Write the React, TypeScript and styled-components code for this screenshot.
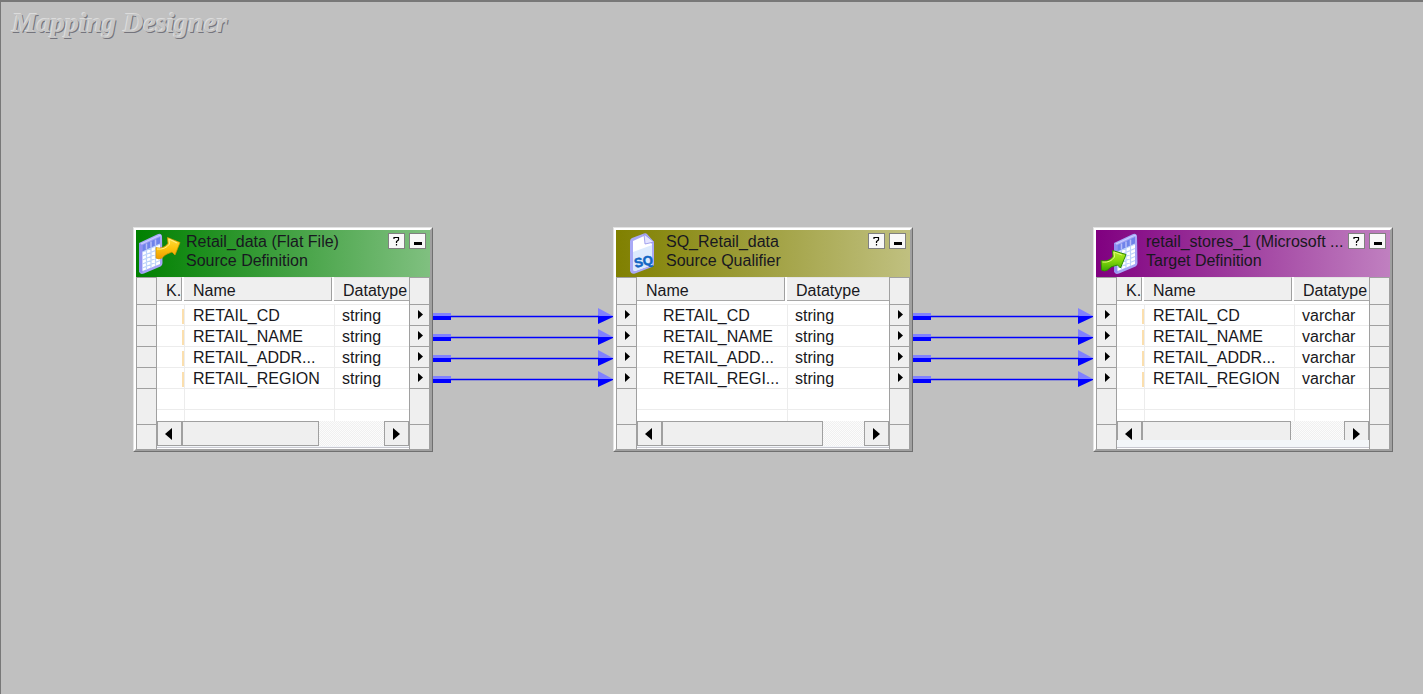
import React from "react";
import styled, { createGlobalStyle, css } from "styled-components";

const GlobalStyle = createGlobalStyle`
  *, *::before, *::after { box-sizing: border-box; }
  body {
    margin: 0;
    background: #c0c0c0;
    color: #181820;
    font-family: "Liberation Sans", Arial, sans-serif;
    font-size: 16px;
  }
  button { font: inherit; color: inherit; }
`;

type Kind = "source" | "qualifier" | "target";

const headerColors: Record<Kind, [string, string]> = {
  source: ["#008000", "#80c080"],
  qualifier: ["#808000", "#c0c080"],
  target: ["#800080", "#c080c0"],
};

const Workspace = styled.main`
  position: relative;
  min-height: 100vh;
  padding: 7px 11px;
  overflow: hidden;
  background: #c0c0c0;
  border-top: 2px solid #787878;
  border-left: 1px solid #787878;
`;

const WorkspaceTitle = styled.h1`
  margin: 0;
  font-family: "Liberation Serif", "Times New Roman", serif;
  font-size: 28px;
  line-height: 28px;
  font-style: italic;
  font-weight: 700;
  color: #c6c6c6;
  text-shadow: -1px -1px 0 #dcdcdc, 1px 1px 0 #74747c;
`;

const LinkLayer = styled.svg`
  position: absolute;
  top: -2px;
  left: -1px;
  width: 100%;
  height: 100%;
  pointer-events: none;
`;

const NodeFrame = styled.section<{ $x: number; $y: number }>`
  position: absolute;
  left: ${(p) => p.$x}px;
  top: ${(p) => p.$y}px;
  width: 300px;
  border: 1px solid;
  border-color: #e3e3e3 #707070 #707070 #e3e3e3;
`;

const NodeInner = styled.div`
  border: 2px solid;
  border-color: #fff #a0a0a0 #a0a0a0 #fff;
`;

const NodeHeader = styled.header<{ $kind: Kind }>`
  display: flex;
  height: 47px;
  padding: 3px 4px 0 2px;
  background: linear-gradient(
    to right,
    ${(p) => headerColors[p.$kind][0]},
    ${(p) => headerColors[p.$kind][1]}
  );
`;

const IconSlot = styled.div`
  flex: none;
  width: 48px;
  svg { display: block; }
`;

const Titles = styled.div`
  flex: 1;
  min-width: 0;
  white-space: nowrap;
`;

const NodeTitle = styled.h2`
  margin: 0;
  font-size: 16px;
  line-height: 18px;
  font-weight: 400;
`;

const NodeSubtitle = styled.p`
  margin: 0;
  line-height: 20px;
`;

const HeaderButtons = styled.div`
  display: flex;
  gap: 4px;
`;

const HeaderButton = styled.button`
  display: flex;
  align-items: center;
  justify-content: center;
  width: 17px;
  height: 16px;
  padding: 0;
  border: 1px solid #808080;
  background: #f8f8f8;
`;

const NodeBody = styled.div`
  display: grid;
  grid-template-columns: 21px 1fr 21px;
  height: 172px;
`;

const Gutter = styled.div`
  display: grid;
  grid-template-rows: 27px repeat(4, 21px) 36px 25px;
  border: 1px solid #a0a0a0;
  border-width: 0 1px;
`;

const Port = styled.div`
  display: flex;
  align-items: center;
  padding: 0 0 2px 8px;
  background: #efefef;
  border-top: 1px solid #a0a0a0;
`;

const Content = styled.div`
  display: flex;
  flex-direction: column;
  min-width: 0;
  background: #fff;
`;

const Columns = styled.table`
  width: 100%;
  table-layout: fixed;
  border-collapse: separate;
  border-spacing: 0;
  white-space: nowrap;
`;

const Col = styled.col<{ $width?: number }>`
  ${(p) => p.$width && css`width: ${p.$width}px;`}
`;

const HeadCell = styled.th`
  height: 27px;
  padding: 0;
  vertical-align: top;
  text-align: left;
  font-weight: 400;
`;

const HeadLabel = styled.div<{ $last?: boolean }>`
  height: 24px;
  padding-left: 9px;
  line-height: 26px;
  background: #efefef;
  border-top: 1px solid #e4e4e4;
  border-bottom: 1px solid #a8a8a8;
  ${(p) =>
    !p.$last &&
    css`
      margin-right: 2px;
      border-right: 1px solid #a0a0a0;
    `}
`;

const Cell = styled.td<{ $indent?: number; $short?: boolean }>`
  height: ${(p) => (p.$short ? 12 : 21)}px;
  padding: 2px 0 0 ${(p) => p.$indent ?? 7}px;
  line-height: 18px;
  border-top: 1px solid #ececec;
  & + & { border-left: 1px solid #ececec; }
`;

const KeyMark = styled.div`
  width: 2px;
  height: 15px;
  margin-left: auto;
  background: #fbdfae;
`;

const ScrollBar = styled.div<{ $clipped?: boolean }>`
  display: flex;
  height: ${(p) => (p.$clipped ? 19 : 25)}px;
  overflow: hidden;
  background: repeating-conic-gradient(#f0f0f0 0 25%, #fcfcfc 0 50%) 0 0 / 2px 2px;
`;

const ScrollButton = styled.button`
  display: flex;
  flex: none;
  align-items: center;
  justify-content: center;
  width: 25px;
  height: 25px;
  padding: 0 3px 0 0;
  border: 1px solid #a0a0a0;
  background: #efefef;
  & ~ & { padding: 0; }
`;

const ScrollTrack = styled.div`
  flex: 1;
`;

const ScrollThumb = styled.div<{ $width: number }>`
  width: ${(p) => p.$width}px;
  height: 25px;
  border: 1px solid #a0a0a0;
  background: #efefef;
`;

const BottomEdge = styled.div`
  flex: 1;
  background: #f3f6f9;
  border-bottom: 1px solid #fff;
  box-shadow: inset 0 -1px 0 #c8c8d0;
`;

const Triangle = ({ left = false }: { left?: boolean }) => (
  <svg width="7" height="12" viewBox="0 0 7 12" aria-hidden="true">
    <path d={left ? "M7 0v12L0 6z" : "M0 0v12L7 6z"} fill="#000" />
  </svg>
);

const PortArrow = () => (
  <svg width="5" height="9" viewBox="0 0 5 9" aria-hidden="true">
    <path d="M0 0v9L5 4.500z" fill="#000" />
  </svg>
);

const Sheet = () => (
  <>
    <path d="M1 10L19 1.500q4-2 5 1.500l.5 27q0 2-2 3.500L6 40.500q-4 1.500-5-2z" fill="#a6a6f7" />
    <path d="M1 10L4.500 12v28q-3 0-3.500-2z" fill="#9090f2" />
    <path d="M4.500 12L22 4v7L4.500 19z" fill="#6f83ea" />
    <path d="M8.500 10.500v6M13 8.500v6M17.500 6.500v6" stroke="#b7bdf8" strokeWidth="1.500" />
    <path d="M4.500 19L22 11v20L4.500 38z" fill="#fff" />
    <path
      d="M4.500 19L22 11M4.500 23L22 15.500M4.500 27L22 19.500M4.500 31L22 23.500M4.500 35L22 27.500M8.500 17v20M13 15v20M17.500 13v20"
      stroke="#bcd3fb"
      strokeWidth="1.200"
      fill="none"
    />
    <path d="M3 11L20 3q2-1 3 0" stroke="#c9ceff" strokeWidth="1.200" fill="none" />
  </>
);

const SourceIcon = () => (
  <svg width="44" height="42" viewBox="0 0 44 42" aria-hidden="true">
    <defs>
      <linearGradient id="gold" x1="0" y1="0" x2="0" y2="1">
        <stop offset="0" stopColor="#ffe040" />
        <stop offset=".5" stopColor="#fdc40e" />
        <stop offset="1" stopColor="#f09a00" />
      </linearGradient>
    </defs>
    <Sheet />
    <path
      d="M18 14.500q7 2 12-4L29.500 4.500 42 9.500 37 22l-3-3q-7 2-10 6-3 2-6 0z"
      fill="url(#gold)"
      stroke="#d99a00"
      strokeWidth=".7"
      strokeLinejoin="round"
    />
    <path d="M19 16q8 1 12.500-5L31 6l8 4" fill="none" stroke="#fff08a" strokeWidth="1" />
  </svg>
);

const TargetIcon = () => (
  <svg width="44" height="42" viewBox="0 0 44 42" aria-hidden="true">
    <defs>
      <linearGradient id="lime" x1="0" y1="0" x2="0" y2="1">
        <stop offset="0" stopColor="#b8ee2c" />
        <stop offset=".5" stopColor="#84d80c" />
        <stop offset="1" stopColor="#3aa800" />
      </linearGradient>
    </defs>
    <g transform="translate(15 0)">
      <Sheet />
    </g>
    <path
      d="M3 27.500q7 2 12-4L14.500 17.500 28 21.500 22.500 35l-3-3q-7 1-10 5-3 2-6 0z"
      fill="url(#lime)"
      stroke="#2f8c00"
      strokeWidth="1"
      strokeLinejoin="round"
    />
    <path d="M4.500 29q8 1 12-5L16 19l8 3" fill="none" stroke="#e2fa7a" strokeWidth="1" />
  </svg>
);

const SqText = styled.text`
  font-family: "Liberation Sans", Arial, sans-serif;
  font-size: 13px;
  font-weight: 700;
`;

const QualifierIcon = () => (
  <svg width="44" height="42" viewBox="0 0 44 42" aria-hidden="true">
    <path d="M12 8q0-2 2-3L26 .5q2-.5 3 .5l7 8v22q0 2-2 3L17 40.500q-4 1-5-3z" fill="#a9a9f6" />
    <path d="M15 8l11-5 8 8v21l-17 6q-2 0-2-2z" fill="#fff" />
    <path d="M15 19l19-7v20l-17 6q-2 0-2-2z" fill="#dceafd" />
    <path d="M26 1l1 10 9-2z" fill="#e4e4ff" stroke="#8f8fe8" strokeWidth=".8" />
    <SqText
      x="16"
      y="33"
      fill="#1266c4"
      stroke="#1266c4"
      strokeWidth=".5"
      transform="rotate(-12 25 28)"
    >
      SQ
    </SqText>
  </svg>
);

const icons: Record<Kind, React.ReactElement> = {
  source: <SourceIcon />,
  qualifier: <QualifierIcon />,
  target: <TargetIcon />,
};

interface MappingNodeProps {
  kind: Kind;
  x: number;
  title: string;
  subtitle: string;
  datatype: string;
  fields: string[];
  keyed?: boolean;
  inputs?: boolean;
  outputs?: boolean;
  thumb: number;
  clipped?: boolean;
}

const Ports = ({ active }: { active?: boolean }) => (
  <Gutter>
    {[0, 1, 2, 3, 4, 5, 6].map((i) => (
      <Port key={i}>{active && i > 0 && i < 5 && <PortArrow />}</Port>
    ))}
  </Gutter>
);

const MappingNode = (p: MappingNodeProps) => {
  const indent = p.keyed ? 8 : 26;
  return (
    <NodeFrame $x={p.x} $y={225} aria-label={p.title}>
      <NodeInner>
        <NodeHeader $kind={p.kind}>
          <IconSlot>{icons[p.kind]}</IconSlot>
          <Titles>
            <NodeTitle>{p.title}</NodeTitle>
            <NodeSubtitle>{p.subtitle}</NodeSubtitle>
          </Titles>
          <HeaderButtons>
            <HeaderButton aria-label="Help">
              <svg width="7" height="10" viewBox="0 0 7 10" aria-hidden="true">
                <path
                  d="M1 3V1.500h4.500v2.500L3.500 5.500V7M3.500 8v1.500"
                  fill="none"
                  stroke="#000"
                  strokeWidth="1.200"
                />
              </svg>
            </HeaderButton>
            <HeaderButton aria-label="Minimize">
              <svg width="8" height="10" viewBox="0 0 8 10" aria-hidden="true">
                <path d="M0 6h8v3H0z" fill="#000" />
              </svg>
            </HeaderButton>
          </HeaderButtons>
        </NodeHeader>
        <NodeBody>
          <Ports active={p.inputs} />
          <Content>
            <Columns>
              <colgroup>
                {p.keyed && <Col $width={27} />}
                <Col $width={150} />
                <Col />
              </colgroup>
              <thead>
                <tr>
                  {p.keyed && (
                    <HeadCell scope="col">
                      <HeadLabel>K.</HeadLabel>
                    </HeadCell>
                  )}
                  <HeadCell scope="col">
                    <HeadLabel>Name</HeadLabel>
                  </HeadCell>
                  <HeadCell scope="col">
                    <HeadLabel $last>Datatype</HeadLabel>
                  </HeadCell>
                </tr>
              </thead>
              <tbody>
                {p.fields.map((field) => (
                  <tr key={field}>
                    {p.keyed && (
                      <Cell>
                        <KeyMark />
                      </Cell>
                    )}
                    <Cell $indent={indent}>{field}</Cell>
                    <Cell>{p.datatype}</Cell>
                  </tr>
                ))}
                {[false, true].map((short) => (
                  <tr key={String(short)}>
                    {p.keyed && <Cell $short={short} />}
                    <Cell $short={short} />
                    <Cell $short={short} />
                  </tr>
                ))}
              </tbody>
            </Columns>
            <ScrollBar $clipped={p.clipped}>
              <ScrollButton aria-label="Scroll left">
                <Triangle left />
              </ScrollButton>
              <ScrollTrack>
                <ScrollThumb $width={p.thumb} />
              </ScrollTrack>
              <ScrollButton aria-label="Scroll right">
                <Triangle />
              </ScrollButton>
            </ScrollBar>
            <BottomEdge />
          </Content>
          <Ports active={p.outputs} />
        </NodeBody>
      </NodeInner>
    </NodeFrame>
  );
};

const Link = ({ x, y }: { x: number; y: number }) => (
  <g transform={`translate(${x} ${y})`}>
    <path d="M0-3h18v3H0z" fill="#8080ff" />
    <path d="M0 0h18v4H0z" fill="#0000ff" />
    <path d="M165-8L180 0h-15z" fill="#8080ff" />
    <path d="M165 0h15v1l-15 7z" fill="#0000ff" />
    <path d="M18-.3h148v1.500H18z" fill="#0000ff" />
  </g>
);

const linkRows = [316, 337, 358, 379];

export default function App() {
  return (
    <>
      <GlobalStyle />
      <Workspace>
        <WorkspaceTitle>Mapping Designer</WorkspaceTitle>
        <MappingNode
          kind="source"
          x={132}
          title="Retail_data (Flat File)"
          subtitle="Source Definition"
          datatype="string"
          fields={["RETAIL_CD", "RETAIL_NAME", "RETAIL_ADDR...", "RETAIL_REGION"]}
          keyed
          outputs
          thumb={137}
        />
        <MappingNode
          kind="qualifier"
          x={612}
          title="SQ_Retail_data"
          subtitle="Source Qualifier"
          datatype="string"
          fields={["RETAIL_CD", "RETAIL_NAME", "RETAIL_ADD...", "RETAIL_REGI..."]}
          inputs
          outputs
          thumb={161}
        />
        <MappingNode
          kind="target"
          x={1092}
          title="retail_stores_1 (Microsoft ..."
          subtitle="Target Definition"
          datatype="varchar"
          fields={["RETAIL_CD", "RETAIL_NAME", "RETAIL_ADDR...", "RETAIL_REGION"]}
          keyed
          inputs
          thumb={149}
          clipped
        />
        <LinkLayer aria-hidden="true">
          {[433, 913].map((x) => linkRows.map((y) => <Link key={`${x}-${y}`} x={x} y={y} />))}
        </LinkLayer>
      </Workspace>
    </>
  );
}
